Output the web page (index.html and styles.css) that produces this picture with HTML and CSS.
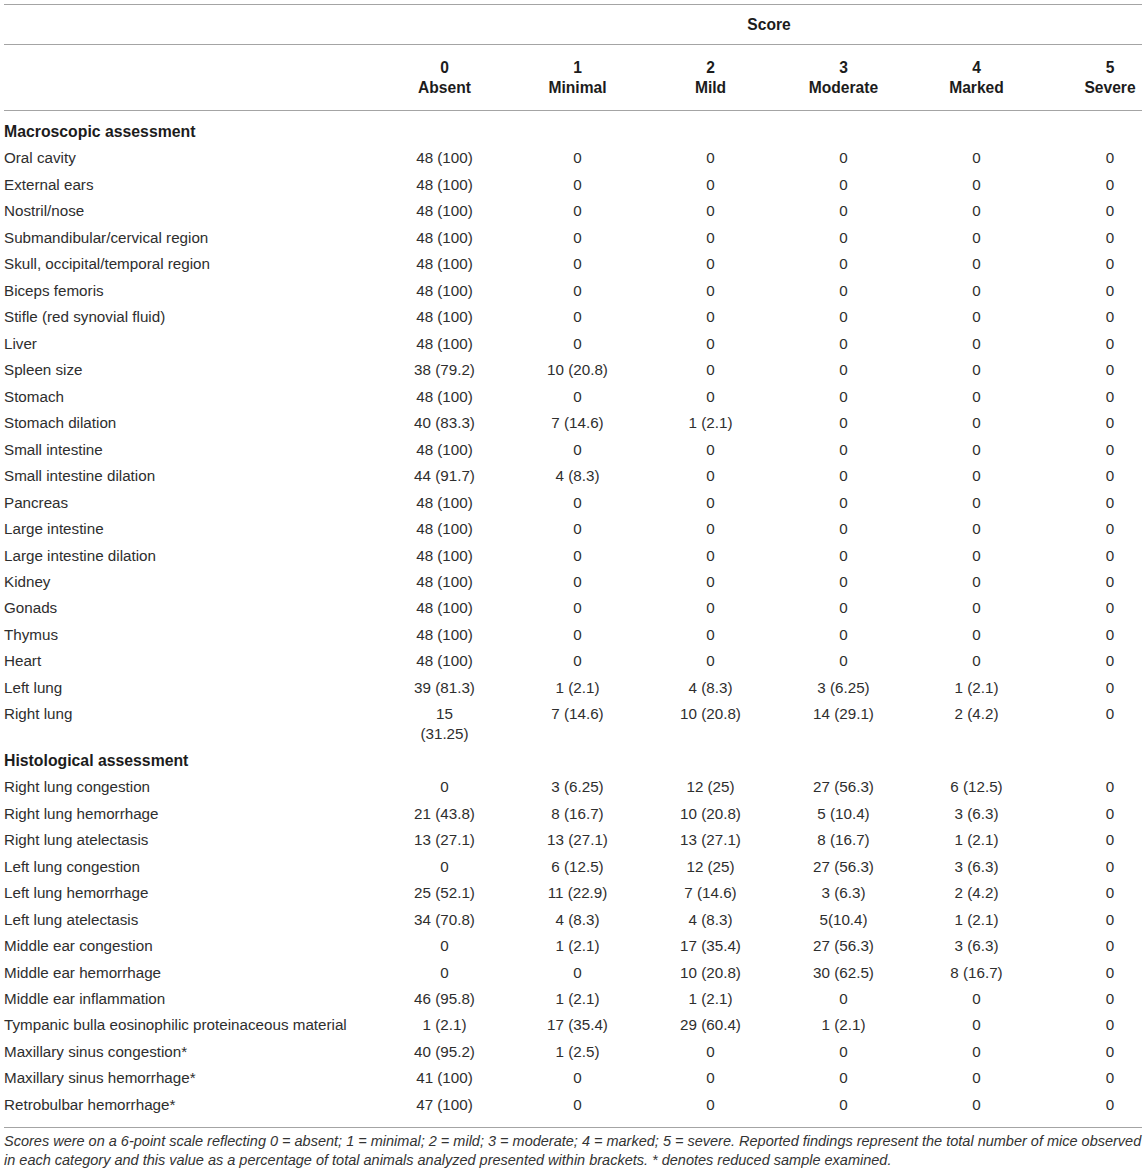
FILE: index.html
```html
<!DOCTYPE html>
<html>
<head>
  <title>Macroscopic and histological scores</title>
  <link rel="stylesheet" href="styles.css">
</head>
<body>
  <div class="page">
    <table class="scores">
      <colgroup>
        <col class="col-label">
        <col class="col-val">
        <col class="col-val">
        <col class="col-val">
        <col class="col-val">
        <col class="col-val">
        <col class="col-last">
      </colgroup>
      <thead>
        <tr class="score-row">
          <th></th>
          <th colspan="6" class="score-title">Score</th>
        </tr>
        <tr class="grade-row">
          <th></th>
          <th>0<br>Absent</th>
          <th>1<br>Minimal</th>
          <th>2<br>Mild</th>
          <th>3<br>Moderate</th>
          <th>4<br>Marked</th>
          <th class="last">5<br>Severe</th>
        </tr>
      </thead>
      <tbody>
        <tr class="section first"><td colspan="7">Macroscopic assessment</td></tr>
        <tr><td>Oral cavity</td><td>48 (100)</td><td>0</td><td>0</td><td>0</td><td>0</td><td class="last">0</td></tr>
        <tr><td>External ears</td><td>48 (100)</td><td>0</td><td>0</td><td>0</td><td>0</td><td class="last">0</td></tr>
        <tr><td>Nostril/nose</td><td>48 (100)</td><td>0</td><td>0</td><td>0</td><td>0</td><td class="last">0</td></tr>
        <tr><td>Submandibular/cervical region</td><td>48 (100)</td><td>0</td><td>0</td><td>0</td><td>0</td><td class="last">0</td></tr>
        <tr><td>Skull, occipital/temporal region</td><td>48 (100)</td><td>0</td><td>0</td><td>0</td><td>0</td><td class="last">0</td></tr>
        <tr><td>Biceps femoris</td><td>48 (100)</td><td>0</td><td>0</td><td>0</td><td>0</td><td class="last">0</td></tr>
        <tr><td>Stifle (red synovial fluid)</td><td>48 (100)</td><td>0</td><td>0</td><td>0</td><td>0</td><td class="last">0</td></tr>
        <tr><td>Liver</td><td>48 (100)</td><td>0</td><td>0</td><td>0</td><td>0</td><td class="last">0</td></tr>
        <tr><td>Spleen size</td><td>38 (79.2)</td><td>10 (20.8)</td><td>0</td><td>0</td><td>0</td><td class="last">0</td></tr>
        <tr><td>Stomach</td><td>48 (100)</td><td>0</td><td>0</td><td>0</td><td>0</td><td class="last">0</td></tr>
        <tr><td>Stomach dilation</td><td>40 (83.3)</td><td>7 (14.6)</td><td>1 (2.1)</td><td>0</td><td>0</td><td class="last">0</td></tr>
        <tr><td>Small intestine</td><td>48 (100)</td><td>0</td><td>0</td><td>0</td><td>0</td><td class="last">0</td></tr>
        <tr><td>Small intestine dilation</td><td>44 (91.7)</td><td>4 (8.3)</td><td>0</td><td>0</td><td>0</td><td class="last">0</td></tr>
        <tr><td>Pancreas</td><td>48 (100)</td><td>0</td><td>0</td><td>0</td><td>0</td><td class="last">0</td></tr>
        <tr><td>Large intestine</td><td>48 (100)</td><td>0</td><td>0</td><td>0</td><td>0</td><td class="last">0</td></tr>
        <tr><td>Large intestine dilation</td><td>48 (100)</td><td>0</td><td>0</td><td>0</td><td>0</td><td class="last">0</td></tr>
        <tr><td>Kidney</td><td>48 (100)</td><td>0</td><td>0</td><td>0</td><td>0</td><td class="last">0</td></tr>
        <tr><td>Gonads</td><td>48 (100)</td><td>0</td><td>0</td><td>0</td><td>0</td><td class="last">0</td></tr>
        <tr><td>Thymus</td><td>48 (100)</td><td>0</td><td>0</td><td>0</td><td>0</td><td class="last">0</td></tr>
        <tr><td>Heart</td><td>48 (100)</td><td>0</td><td>0</td><td>0</td><td>0</td><td class="last">0</td></tr>
        <tr><td>Left lung</td><td>39 (81.3)</td><td>1 (2.1)</td><td>4 (8.3)</td><td>3 (6.25)</td><td>1 (2.1)</td><td class="last">0</td></tr>
        <tr><td>Right lung</td><td>15<br>(31.25)</td><td>7 (14.6)</td><td>10 (20.8)</td><td>14 (29.1)</td><td>2 (4.2)</td><td class="last">0</td></tr>

        <tr class="section"><td colspan="7">Histological assessment</td></tr>
        <tr><td>Right lung congestion</td><td>0</td><td>3 (6.25)</td><td>12 (25)</td><td>27 (56.3)</td><td>6 (12.5)</td><td class="last">0</td></tr>
        <tr><td>Right lung hemorrhage</td><td>21 (43.8)</td><td>8 (16.7)</td><td>10 (20.8)</td><td>5 (10.4)</td><td>3 (6.3)</td><td class="last">0</td></tr>
        <tr><td>Right lung atelectasis</td><td>13 (27.1)</td><td>13 (27.1)</td><td>13 (27.1)</td><td>8 (16.7)</td><td>1 (2.1)</td><td class="last">0</td></tr>
        <tr><td>Left lung congestion</td><td>0</td><td>6 (12.5)</td><td>12 (25)</td><td>27 (56.3)</td><td>3 (6.3)</td><td class="last">0</td></tr>
        <tr><td>Left lung hemorrhage</td><td>25 (52.1)</td><td>11 (22.9)</td><td>7 (14.6)</td><td>3 (6.3)</td><td>2 (4.2)</td><td class="last">0</td></tr>
        <tr><td>Left lung atelectasis</td><td>34 (70.8)</td><td>4 (8.3)</td><td>4 (8.3)</td><td>5(10.4)</td><td>1 (2.1)</td><td class="last">0</td></tr>
        <tr><td>Middle ear congestion</td><td>0</td><td>1 (2.1)</td><td>17 (35.4)</td><td>27 (56.3)</td><td>3 (6.3)</td><td class="last">0</td></tr>
        <tr><td>Middle ear hemorrhage</td><td>0</td><td>0</td><td>10 (20.8)</td><td>30 (62.5)</td><td>8 (16.7)</td><td class="last">0</td></tr>
        <tr><td>Middle ear inflammation</td><td>46 (95.8)</td><td>1 (2.1)</td><td>1 (2.1)</td><td>0</td><td>0</td><td class="last">0</td></tr>
        <tr><td>Tympanic bulla eosinophilic proteinaceous material</td><td>1 (2.1)</td><td>17 (35.4)</td><td>29 (60.4)</td><td>1 (2.1)</td><td>0</td><td class="last">0</td></tr>
        <tr><td>Maxillary sinus congestion*</td><td>40 (95.2)</td><td>1 (2.5)</td><td>0</td><td>0</td><td>0</td><td class="last">0</td></tr>
        <tr><td>Maxillary sinus hemorrhage*</td><td>41 (100)</td><td>0</td><td>0</td><td>0</td><td>0</td><td class="last">0</td></tr>
        <tr class="end"><td>Retrobulbar hemorrhage*</td><td>47 (100)</td><td>0</td><td>0</td><td>0</td><td>0</td><td class="last">0</td></tr>
      </tbody>
    </table>

    <p class="note">Scores were on a 6-point scale reflecting 0 = absent; 1 = minimal; 2 = mild; 3 = moderate; 4 = marked; 5 = severe. Reported findings represent the total number of mice observed in each category and this value as a percentage of total animals analyzed presented within brackets. * denotes reduced sample examined.</p>
  </div>
</body>
</html>
```

FILE: styles.css
```css
body {
  margin: 0;
  background: #ffffff;
  font-family: "Liberation Sans", Arial, sans-serif;
  font-size: 15.2px;
  color: #2e2e2e;
}

.page {
  padding: 4px 4px 0;
}

.scores {
  width: 1138px;
  table-layout: fixed;
  border-collapse: separate;
  border-spacing: 0;
  line-height: 20px;
}

.col-label { width: 374px; }
.col-val { width: 133px; }
.col-last { width: 99px; }

.scores th {
  font-size: 15.6px;
  font-weight: bold;
  color: #1c1c1c;
  text-align: center;
  vertical-align: top;
}

.score-row th {
  border-top: 1px solid #a4a4a4;
  border-bottom: 1px solid #a4a4a4;
  padding: 9.5px 0;
}

.score-title {
  padding-left: 18px !important;
}

.grade-row th {
  border-bottom: 1px solid #a4a4a4;
  padding: 13px 0 12px;
}

.scores td {
  padding: 3.24px 0;
  text-align: center;
  vertical-align: top;
}

.scores td:first-child {
  text-align: left;
}

.scores .last {
  padding-left: 35px;
}

.section td {
  font-size: 15.8px;
  font-weight: bold;
  color: #1c1c1c;
}

.section.first td {
  padding-top: 11px;
}

.end td {
  padding-bottom: 12px;
  border-bottom: 1px solid #a4a4a4;
}

.note {
  margin: 4px 0 0;
  font-size: 14.5px;
  font-style: italic;
  line-height: 19px;
  color: #333333;
}
```
